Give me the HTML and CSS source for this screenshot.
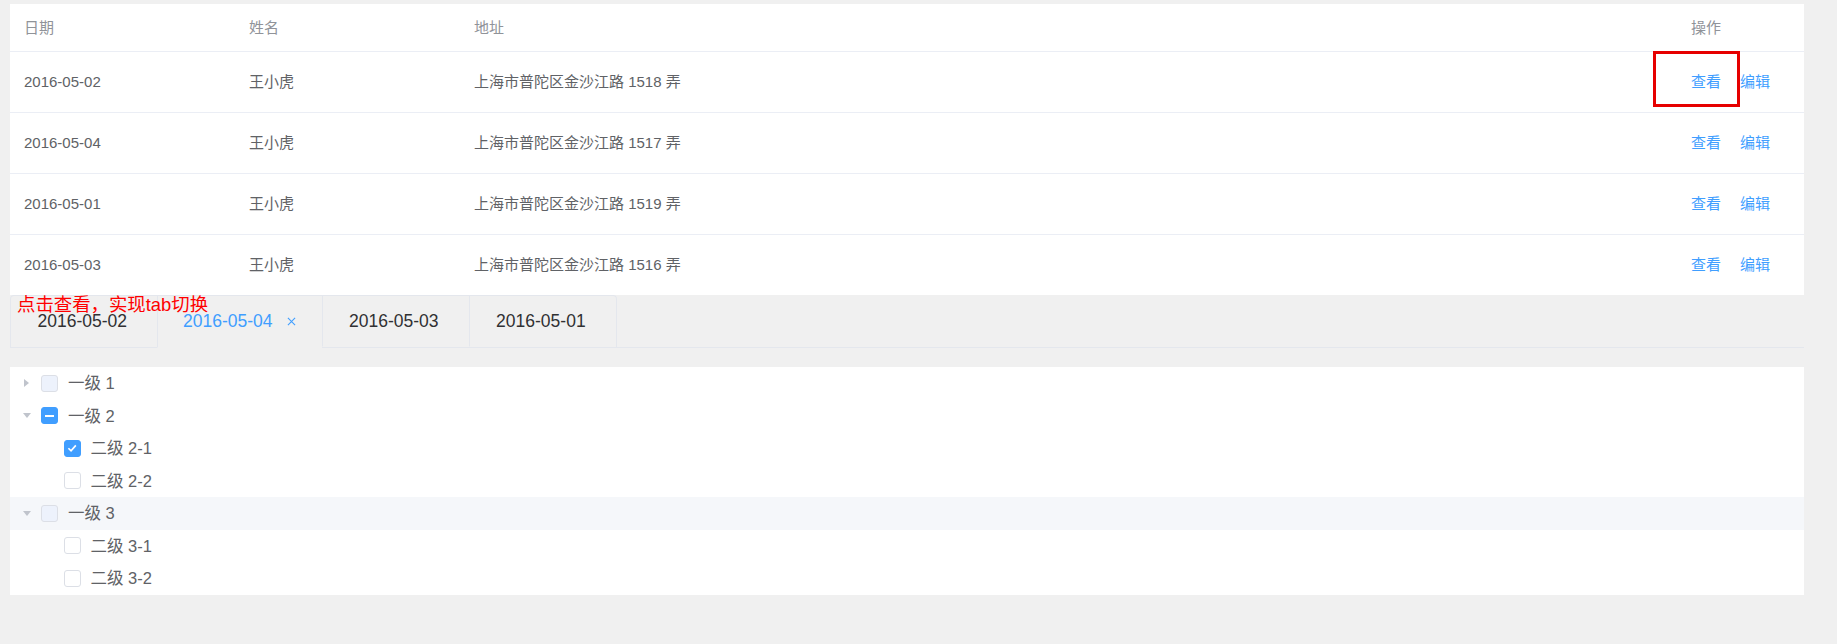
FILE: index.html
```html
<!DOCTYPE html>
<html lang="zh">
<head>
<meta charset="utf-8">
<title>tab切换</title>
<link rel="stylesheet" href="styles.css">
</head>
<body>
<div class="page">
  <table class="data-table">
    <colgroup>
      <col class="c-date">
      <col class="c-name">
      <col class="c-addr">
      <col class="c-op">
    </colgroup>
    <thead>
      <tr><th>日期</th><th>姓名</th><th>地址</th><th>操作</th></tr>
    </thead>
    <tbody>
      <tr>
        <td>2016-05-02</td><td>王小虎</td><td>上海市普陀区金沙江路 1518 弄</td>
        <td class="op"><span class="hl-box"></span><a class="link">查看</a><a class="link">编辑</a></td>
      </tr>
      <tr>
        <td>2016-05-04</td><td>王小虎</td><td>上海市普陀区金沙江路 1517 弄</td>
        <td class="op"><a class="link">查看</a><a class="link">编辑</a></td>
      </tr>
      <tr>
        <td>2016-05-01</td><td>王小虎</td><td>上海市普陀区金沙江路 1519 弄</td>
        <td class="op"><a class="link">查看</a><a class="link">编辑</a></td>
      </tr>
      <tr>
        <td>2016-05-03</td><td>王小虎</td><td>上海市普陀区金沙江路 1516 弄</td>
        <td class="op"><a class="link">查看</a><a class="link">编辑</a></td>
      </tr>
    </tbody>
  </table>

  <div class="tabs">
    <div class="note">点击查看，实现tab切换</div>
    <div class="tabs-header">
      <div class="tabs-nav">
        <div class="tab">2016-05-02</div>
        <div class="tab active">2016-05-04<svg class="close" viewBox="0 0 10 10"><path d="M1 1L9 9M9 1L1 9"/></svg></div>
        <div class="tab">2016-05-03</div>
        <div class="tab">2016-05-01</div>
      </div>
    </div>
  </div>

  <div class="tree">
    <div class="node">
      <span class="arrow-box"><span class="arrow right"></span></span>
      <span class="cb muted"></span><span class="label">一级 1</span>
    </div>
    <div class="node">
      <span class="arrow-box"><span class="arrow down"></span></span>
      <span class="cb indeterminate"><span class="bar"></span></span><span class="label">一级 2</span>
    </div>
    <div class="node level2">
      <span class="arrow-box"></span>
      <span class="cb checked"><svg viewBox="0 0 10 10"><path d="M2 5.2L4.2 7.3L8.2 2.8"/></svg></span><span class="label">二级 2-1</span>
    </div>
    <div class="node level2">
      <span class="arrow-box"></span>
      <span class="cb"></span><span class="label">二级 2-2</span>
    </div>
    <div class="node current">
      <span class="arrow-box"><span class="arrow down"></span></span>
      <span class="cb muted"></span><span class="label">一级 3</span>
    </div>
    <div class="node level2">
      <span class="arrow-box"></span>
      <span class="cb"></span><span class="label">二级 3-1</span>
    </div>
    <div class="node level2">
      <span class="arrow-box"></span>
      <span class="cb"></span><span class="label">二级 3-2</span>
    </div>
  </div>
</div>
</body>
</html>
```

FILE: styles.css
```css
html, body {
  margin: 0;
  padding: 0;
}

body {
  background: #f0f0f0;
  font-family: "Liberation Sans", "Noto Sans CJK SC", sans-serif;
  height: 644px;
  overflow: hidden;
}

.page {
  padding: 4px 33px 0 10px;
}

/* ---------- table ---------- */
.data-table {
  width: 100%;
  border-collapse: separate;
  border-spacing: 0;
  table-layout: fixed;
  background: #fff;
  font-size: 15px;
  color: #606266;
}

.c-date { width: 225px; }
.c-name { width: 225px; }
.c-addr { width: 1217px; }
.c-op { width: 127px; }

.data-table th,
.data-table td {
  padding: 0 14px;
  text-align: left;
  vertical-align: middle;
  line-height: 20px;
  font-weight: normal;
  white-space: nowrap;
  border-bottom: 1px solid #ebeef5;
}

.data-table th {
  height: 47px;
  color: #909399;
}

.data-table td {
  height: 60px;
}

.data-table tbody tr:last-child td {
  border-bottom: none;
}

.op {
  position: relative;
}

.link {
  color: #409eff;
  cursor: pointer;
}

.link + .link {
  margin-left: 19px;
}

.hl-box {
  position: absolute;
  left: -24px;
  top: -1px;
  width: 81px;
  height: 50px;
  border: 3px solid #e60000;
}

/* ---------- tabs ---------- */
.tabs {
  position: relative;
}

.note {
  position: absolute;
  left: 7px;
  top: 0;
  font-size: 18.4px;
  line-height: 20px;
  color: #f00;
  z-index: 2;
  white-space: nowrap;
}

.tabs-header {
  border-bottom: 1px solid #e4e7ed;
  margin-bottom: 19px;
}

.tabs-nav {
  display: inline-flex;
  border: 1px solid #e4e7ed;
  border-bottom: none;
  border-radius: 4px 4px 0 0;
  margin-bottom: -1px;
}

.tab {
  display: flex;
  align-items: center;
  height: 51px;
  padding: 0 30px 0 26.5px;
  font-size: 17.5px;
  color: #303133;
  border-left: 1px solid #e4e7ed;
  border-bottom: 1px solid transparent;
  box-sizing: border-box;
}

.tab:first-child {
  border-left: none;
}

.tab.active {
  color: #409eff;
  border-bottom-color: #f0f0f0;
  padding: 0 26px 0 25px;
  height: 52px;
}

.close {
  width: 9px;
  height: 9px;
  margin-left: 14px;
  stroke: #409eff;
  stroke-width: 1.2;
  fill: none;
}

/* ---------- tree ---------- */
.tree {
  background: #fff;
  font-size: 16.5px;
  color: #606266;
}

.node {
  display: flex;
  align-items: center;
  height: 32.5px;
}

.node.current {
  background: #f5f7fa;
}

.node.level2 {
  padding-left: 22.5px;
}

.arrow-box {
  width: 31px;
  height: 12px;
  display: flex;
  align-items: center;
  padding-left: 13px;
  box-sizing: border-box;
  flex: none;
}

.arrow {
  width: 0;
  height: 0;
}

.arrow.right {
  margin-left: 1px;
  border-left: 5px solid #c0c4cc;
  border-top: 4px solid transparent;
  border-bottom: 4px solid transparent;
}

.arrow.down {
  border-top: 5px solid #c0c4cc;
  border-left: 4px solid transparent;
  border-right: 4px solid transparent;
}

.cb {
  width: 17px;
  height: 17px;
  box-sizing: border-box;
  border: 1px solid #dcdfe6;
  border-radius: 3px;
  background: #fff;
  margin-right: 10px;
  flex: none;
  display: flex;
  align-items: center;
  justify-content: center;
}

.cb.muted {
  background: #edf2fc;
}

.cb.checked,
.cb.indeterminate {
  background: #409eff;
  border-color: #409eff;
}

.cb .bar {
  width: 9px;
  height: 2px;
  background: #fff;
}

.cb svg {
  width: 12px;
  height: 12px;
  fill: none;
  stroke: #fff;
  stroke-width: 1.4;
}

.label {
  line-height: 20px;
  white-space: nowrap;
}
```
